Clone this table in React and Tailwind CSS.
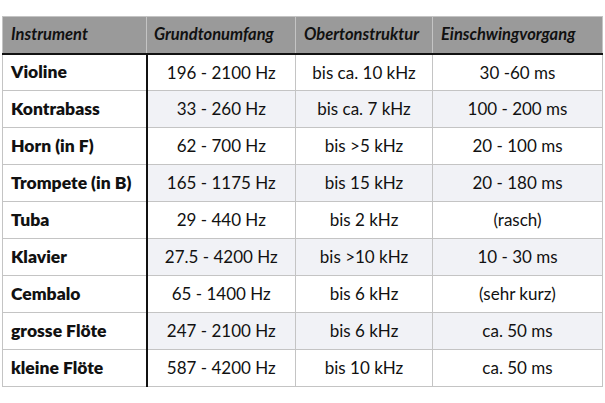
import React from "react";

const rows = [
  ["Violine", "196 - 2100 Hz", "bis ca. 10 kHz", "30 -60 ms"],
  ["Kontrabass", "33 - 260 Hz", "bis ca. 7 kHz", "100 - 200 ms"],
  ["Horn (in F)", "62 - 700 Hz", "bis >5 kHz", "20 - 100 ms"],
  ["Trompete (in B)", "165 - 1175 Hz", "bis 15 kHz", "20 - 180 ms"],
  ["Tuba", "29 - 440 Hz", "bis 2 kHz", "(rasch)"],
  ["Klavier", "27.5 - 4200 Hz", "bis >10 kHz", "10 - 30 ms"],
  ["Cembalo", "65 - 1400 Hz", "bis 6 kHz", "(sehr kurz)"],
  ["grosse Flöte", "247 - 2100 Hz", "bis 6 kHz", "ca. 50 ms"],
  ["kleine Flöte", "587 - 4200 Hz", "bis 10 kHz", "ca. 50 ms"],
];

export default function App() {
  return (
    <div className="w-[605px] h-[403px] bg-white pt-[16px] pl-[2px]" style={{ fontFamily: "Lato, 'Liberation Sans', sans-serif" }}>
      <table className="border-collapse table-fixed w-[600px] text-[#111]">
        <colgroup>
          <col className="w-[144px]" />
          <col className="w-[149px]" />
          <col className="w-[137px]" />
          <col className="w-[170px]" />
        </colgroup>
        <thead>
          <tr className="h-[37px] bg-[#9a9a9a] text-[16.5px] italic font-bold">
            <th className="border border-[#c4c4c4] border-b-2 border-b-[#111] text-left pl-[8px]">Instrument</th>
            <th className="border border-[#c4c4c4] border-b-2 border-b-[#111] text-left pl-[7px]">Grundtonumfang</th>
            <th className="border border-[#c4c4c4] border-b-2 border-b-[#111] text-left pl-[8px]">Obertonstruktur</th>
            <th className="border border-[#c4c4c4] border-b-2 border-b-[#111] text-left pl-[8px]">Einschwingvorgang</th>
          </tr>
        </thead>
        <tbody className="text-[17px]">
          {rows.map((r, i) => {
            const stripe = i % 2 === 1 ? "bg-[#f1f2f6]" : "bg-white";
            return (
              <tr key={i} className="h-[37px]">
                <td className="border border-[#c4c4c4] border-r-2 border-r-[#111] pl-[8px] text-[17.5px] font-extrabold bg-white">{r[0]}</td>
                <td className={`border border-[#c4c4c4] text-center ${stripe}`}>{r[1]}</td>
                <td className={`border border-[#c4c4c4] text-center ${stripe}`}>{r[2]}</td>
                <td className={`border border-[#c4c4c4] text-center ${stripe}`}>{r[3]}</td>
              </tr>
            );
          })}
        </tbody>
      </table>
    </div>
  );
}
